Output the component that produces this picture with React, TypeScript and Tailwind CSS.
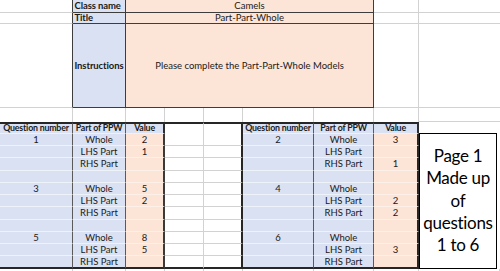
import React from 'react';

type Row = [string, string, string];

const leftRows: Row[] = [
  ['1', 'Whole', '2'],
  ['', 'LHS Part', '1'],
  ['', 'RHS Part', ''],
  ['', '', ''],
  ['3', 'Whole', '5'],
  ['', 'LHS Part', '2'],
  ['', 'RHS Part', ''],
  ['', '', ''],
  ['5', 'Whole', '8'],
  ['', 'LHS Part', '5'],
  ['', 'RHS Part', ''],
];

const rightRows: Row[] = [
  ['2', 'Whole', '3'],
  ['', 'LHS Part', ''],
  ['', 'RHS Part', '1'],
  ['', '', ''],
  ['4', 'Whole', ''],
  ['', 'LHS Part', '2'],
  ['', 'RHS Part', '2'],
  ['', '', ''],
  ['6', 'Whole', ''],
  ['', 'LHS Part', '3'],
  ['', 'RHS Part', ''],
];

const Cell: React.FC<{ className?: string; children?: React.ReactNode }> = ({ className = '', children }) => (
  <div className={`flex items-center overflow-hidden whitespace-nowrap ${className}`}>{children}</div>
);

// white spreadsheet cell with excel gridlines
const Grid: React.FC<{ className?: string }> = ({ className = '' }) => (
  <Cell className={`bg-white border-r border-b border-[#d2d2d2] ${className}`} />
);

const head = 'bg-[#d9e1f2] border-t-2 border-t-[#262626] border-b border-b-[#eef1f8] justify-center font-bold text-[8.8px] tracking-[-0.2px]';

const App: React.FC = () => {
  return (
    <div
      className="w-[500px] h-[271px] overflow-hidden bg-white text-[9.5px] leading-none text-[#1a1a1a]"
      style={{ fontFamily: 'Lato, "Liberation Sans", sans-serif' }}
    >
      <div className="grid grid-cols-[73px_53px_39px_39px_39px_71px_60px_45px_81px] grid-rows-[12.7px_11.6px_84px_13.4px_12.3px_repeat(11,12.25px)_12px]">
        {/* header block */}
        {[
          ['Class name', 'Camels', ''],
          ['Title', 'Part-Part-Whole', ''],
          ['Instructions', 'Please complete the Part-Part-Whole Models', 'big'],
        ].map(([label, value, kind]) => (
          <React.Fragment key={label}>
            <Cell className="bg-white border-r border-r-[#3d3d3d] border-b border-b-[#d2d2d2]" />
            <Cell
              className={`bg-[#d9e1f2] border-r border-b border-[#3d3d3d] font-bold tracking-[-0.1px] ${
                kind === 'big' ? 'justify-center' : 'pl-[1.5px]'
              }`}
            >
              {label}
            </Cell>
            <Cell className="col-span-5 bg-[#fce4d6] border-r border-b border-[#3d3d3d] justify-center">{value}</Cell>
            <Grid />
            <Grid className="border-r-0" />
          </React.Fragment>
        ))}

        {/* spacer row */}
        {Array.from({ length: 9 }).map((_, i) => (
          <Grid key={`sp${i}`} className={i === 8 ? 'border-r-0' : 'border-b-0'} />
        ))}

        {/* table headers */}
        {[0, 1].map((t) => (
          <React.Fragment key={`h${t}`}>
            <Cell className={`${head} border-r border-r-[#5a5a5a]`}>Question number</Cell>
            <Cell className={`${head} border-r border-r-[#5a5a5a]`}>Part of PPW</Cell>
            <Cell className={`${head} border-r-2 border-r-[#2e2e2e]`}>Value</Cell>
            {t === 0 && (
              <>
                <Cell className="bg-white border-t-2 border-t-[#262626] border-r border-r-[#d2d2d2]" />
                <Cell className="bg-white border-t-2 border-t-[#262626] border-r-2 border-r-[#262626]" />
              </>
            )}
          </React.Fragment>
        ))}
        <Cell className="bg-white" />

        {/* data rows */}
        {leftRows.map((l, i) => {
          const r = rightRows[i];
          const last = i === leftRows.length - 1;
          const bb = last ? 'border-b-2 border-b-[#262626]' : 'border-b border-b-[#eef2f9]';
          const bp = last ? 'border-b-2 border-b-[#262626]' : 'border-b border-b-[#fdf0e8]';
          const bw = last ? 'border-b-2 border-b-[#262626]' : 'border-b border-b-[#d2d2d2]';
          return (
            <React.Fragment key={`r${i}`}>
              <Cell className={`bg-[#d9e1f2] border-r border-r-[#5a5a5a] justify-center ${bb}`}>{l[0]}</Cell>
              <Cell className={`bg-[#d9e1f2] border-r border-r-[#5a5a5a] justify-center ${bb}`}>{l[1]}</Cell>
              <Cell className={`bg-[#fce4d6] border-r-2 border-r-[#3a3a3a] justify-center ${bp}`}>{l[2]}</Cell>
              <Cell className={`bg-white border-r border-r-[#d2d2d2] ${bw}`} />
              <Cell className={`bg-white border-r-2 border-r-[#262626] ${bw}`} />
              <Cell className={`bg-[#d9e1f2] border-r border-r-[#5a5a5a] justify-center ${bb}`}>{r[0]}</Cell>
              <Cell className={`bg-[#d9e1f2] border-r border-r-[#5a5a5a] justify-center ${bb}`}>{r[1]}</Cell>
              <Cell className={`bg-[#fce4d6] border-r-2 border-r-[#262626] justify-center ${bp}`}>{r[2]}</Cell>
              {i === 0 && (
                <div className="row-span-11 flex bg-white pr-[3px] -mt-px">
                  <div className="flex flex-1 flex-col items-center justify-center border-[1.5px] border-black bg-white text-[17px] leading-[22.3px] tracking-[-0.3px] text-black">
                    <span>Page 1</span>
                    <span>Made up</span>
                    <span>of</span>
                    <span>questions</span>
                    <span>1 to 6</span>
                  </div>
                </div>
              )}
            </React.Fragment>
          );
        })}

        {/* trailing row */}
        {Array.from({ length: 9 }).map((_, i) => (
          <Grid key={`t${i}`} />
        ))}
      </div>
    </div>
  );
};

export default App;
